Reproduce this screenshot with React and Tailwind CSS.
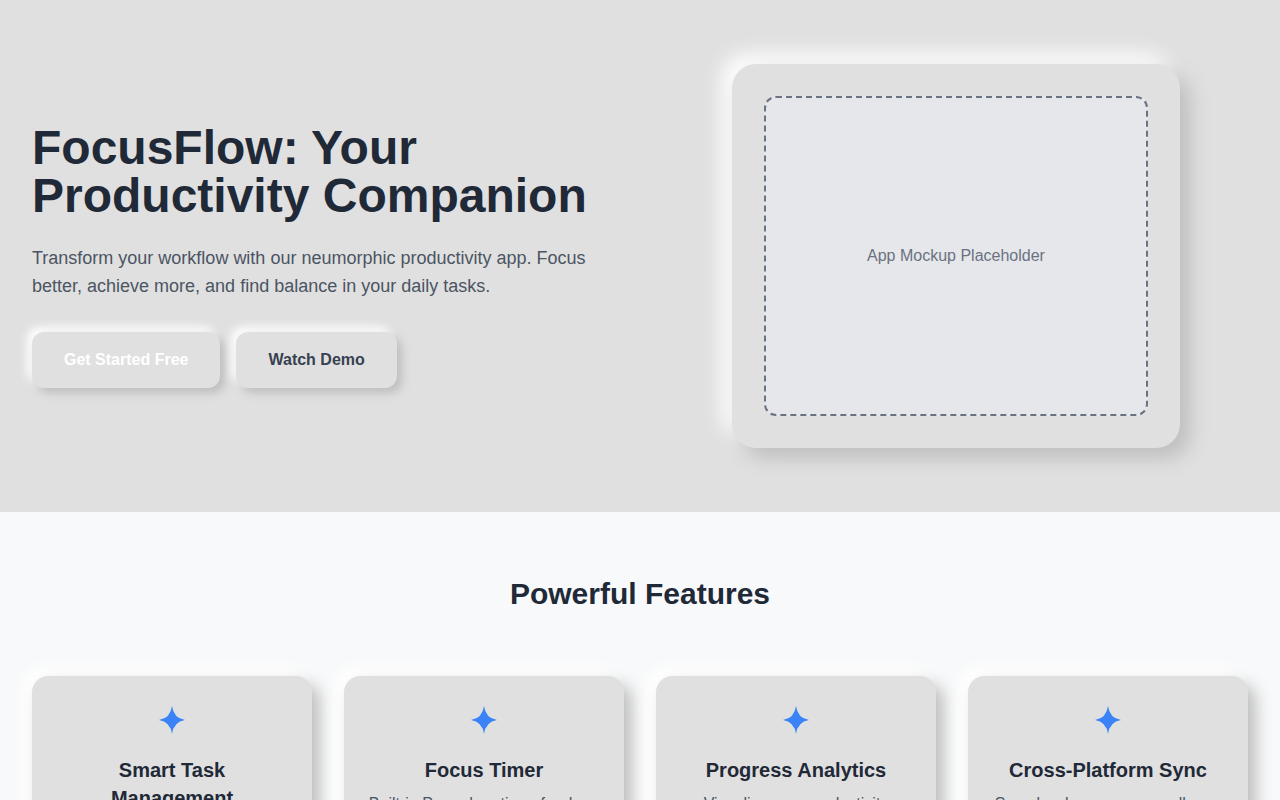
import React from 'react';

const features = [
  {
    title: 'Smart Task Management',
    text: 'Organize tasks with intelligent prioritization and smart categories.',
  },
  {
    title: 'Focus Timer',
    text: 'Built-in Pomodoro timer for deep work sessions and mindful breaks.',
  },
  {
    title: 'Progress Analytics',
    text: 'Visualize your productivity trends and celebrate your milestones.',
  },
  {
    title: 'Cross-Platform Sync',
    text: 'Seamlessly sync across all your devices, online or offline.',
  },
];

function Sparkle() {
  return (
    <svg width="26" height="28" viewBox="0 0 26 28" className="text-[#3b82f6]">
      <path
        d="M13 0 Q14.6 12.2 26 14 Q14.6 15.8 13 28 Q11.4 15.8 0 14 Q11.4 12.2 13 0 Z"
        fill="currentColor"
      />
    </svg>
  );
}

export default function App() {
  return (
    <div className="min-h-screen font-['Liberation_Sans',Arial,sans-serif] bg-[#f8f9fa]">
      <section className="bg-[#e0e0e0] px-8 py-16">
        <div className="grid grid-cols-2 gap-12 items-center">
          <div>
            <h1 className="text-5xl font-bold text-[#1f2937] mb-6">
              FocusFlow: Your Productivity Companion
            </h1>
            <p className="text-lg text-[#4b5563] mb-8">
              Transform your workflow with our neumorphic productivity app. Focus better, achieve more, and find balance in your daily tasks.
            </p>
            <div className="flex gap-4">
              <button className="px-8 py-4 rounded-xl bg-[#e0e0e0] text-white font-bold shadow-[5px_5px_10px_#bebebe,-5px_-5px_10px_#ffffff]">
                Get Started Free
              </button>
              <button className="px-8 py-4 rounded-xl bg-[#e0e0e0] text-[#374151] font-bold shadow-[5px_5px_10px_#bebebe,-5px_-5px_10px_#ffffff]">
                Watch Demo
              </button>
            </div>
          </div>
          <div className="flex justify-center">
            <div className="w-full max-w-md p-8 rounded-3xl bg-[#e0e0e0] shadow-[10px_10px_20px_#bebebe,-10px_-10px_20px_#ffffff]">
              <div className="h-80 rounded-xl border-2 border-dashed border-[#6b7280] bg-[#e5e7eb] flex items-center justify-center text-[#6b7280]">
                App Mockup Placeholder
              </div>
            </div>
          </div>
        </div>
      </section>

      <section className="bg-[#f8f9fa] px-8 py-16">
        <h2 className="text-3xl font-bold text-center text-[#1f2937] mb-16">Powerful Features</h2>
        <div className="grid grid-cols-4 gap-8">
          {features.map((f) => (
            <div
              key={f.title}
              className="p-6 rounded-2xl bg-[#e0e0e0] text-center shadow-[8px_8px_16px_#bebebe,-8px_-8px_16px_#ffffff]"
            >
              <div className="h-10 mb-4 flex items-center justify-center">
                <Sparkle />
              </div>
              <h3 className="text-xl font-bold text-[#1f2937] mb-2">{f.title}</h3>
              <p className="text-base text-[#4b5563]">{f.text}</p>
            </div>
          ))}
        </div>
      </section>
    </div>
  );
}
